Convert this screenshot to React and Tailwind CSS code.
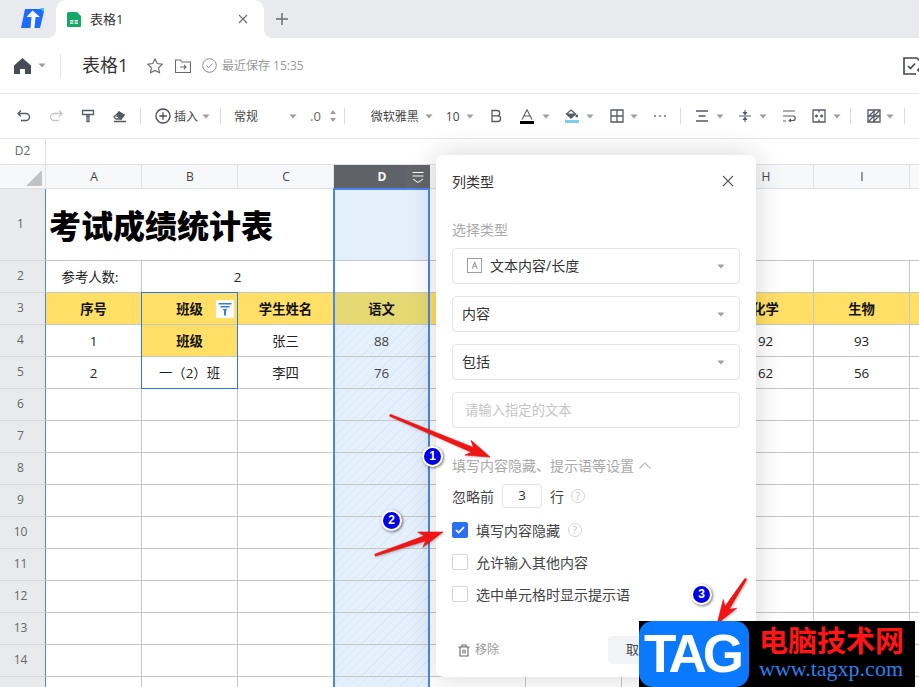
import React from 'react';

const Caret = ({ className = '' }) => (
  <svg width="8" height="5" viewBox="0 0 8 5" className={className}><path d="M0.5 0.5h7L4 4.5z" fill="#9a9da3" /></svg>
);
const Ico = ({ children, w = 16, h = 16, vb, className = '' }) => (
  <svg width={w} height={h} viewBox={vb || `0 0 ${w} ${h}`} fill="none" stroke="#555a64" strokeWidth="1.3" className={className}>{children}</svg>
);
const Sep = ({ className = '' }) => <div className={`w-px h-4 bg-[#d9dbde] ${className}`} />;

const Help = ({ className = '' }) => (
  <span className={`w-[14px] h-[14px] rounded-full border border-[#d4d4d4] text-[#c4c4c4] text-[10px] leading-[12px] text-center shrink-0 ${className}`}>?</span>
);

function Arrow({ x1, y1, x2, y2 }) {
  const dx = x2 - x1, dy = y2 - y1, L = Math.hypot(dx, dy), ux = dx / L, uy = dy / L, nx = -uy, ny = ux;
  const p = (a, b) => `${(x1 + ux * a + nx * b).toFixed(1)},${(y1 + uy * a + ny * b).toFixed(1)}`;
  const pts = [p(0, -0.8), p(L - 19, -2.4), p(L - 24, -8), p(L, 0), p(L - 24, 8), p(L - 19, 2.8), p(0, 1.2)].join(' ');
  return <polygon points={pts} fill="#f01414" stroke="#e81010" strokeWidth="0.6" />;
}

const Badge = ({ n, className }) => (
  <div className={`absolute w-[21px] h-[21px] rounded-full bg-[#0000e6] border-2 border-white shadow-[1px_1px_3px_rgba(0,0,0,.55)] text-white text-[12px] font-bold leading-[17px] text-center font-['Liberation_Sans',sans-serif] ${className}`}>{n}</div>
);

const colLetters = ['A', 'B', 'C', 'D', 'E', 'F', 'G', 'H', 'I', 'J'];
const line = 'border-r border-b border-[#c6c6c6]';
const hatch = "bg-[repeating-linear-gradient(135deg,#e4f0fb_0px,#e4f0fb_5px,#d9e9f7_5px,#d9e9f7_6px)]";

const RowHead = ({ n }) => (
  <div className="flex items-center justify-center pr-1 pb-0.5 bg-[#e9eaec] border-r border-r-[#4a86f0] border-b border-b-[#d4d6d9] text-[12px] text-[#666]">{n}</div>
);

const Cell = ({ children, className = '', span = '' }) => (
  <div className={`flex items-center justify-center pt-[2px] ${line} ${span} ${className}`}>{children}</div>
);

function Grid() {
  const headers = ['序号', '班级', '学生姓名', '语文', '', '', '', '化学', '生物', ''];
  const r4 = ['1', '班级', '张三', '88', '', '', '', '92', '93', ''];
  const r5 = ['2', '一（2）班', '李四', '76', '', '', '', '62', '56', ''];
  const yellow = 'bg-[#ffdf66] font-bold text-[#111]';
  return (
    <div className="grid grid-cols-[46px_repeat(10,96px)] grid-rows-[24px_72px_repeat(14,32px)] text-[13.33px] text-[#222]">
      <div className="relative bg-[#f7f8fa] border-r border-b border-[#dfe1e5]">
        <div className="absolute right-[3px] bottom-[2px] w-4 h-4 bg-[#c0c2c5] [clip-path:polygon(100%_0,100%_100%,0_100%)]" />
      </div>
      {colLetters.map((c) => c === 'D' ? (
        <div key={c} className="relative flex items-center justify-center bg-[#5f6266] text-white font-bold text-[12px]">
          D
          <div className="absolute right-0 top-0 bottom-0 w-6 flex items-center justify-center bg-[#636569]">
            <svg width="14" height="14" viewBox="0 0 14 14" fill="none" stroke="#fff" strokeWidth="1"><path d="M1.5 2.5h11M1.5 6h11M2 9l5 3.5L12 9" /></svg>
          </div>
        </div>
      ) : (
        <div key={c} className="flex items-center justify-center pl-px bg-[#f7f8fa] border-r border-b border-[#dfe1e5] text-[12px] text-[#444]">{c}</div>
      ))}

      <RowHead n={1} />
      <Cell span="col-span-3" className="justify-start pl-[3px] pt-[3px] bg-white">
        <span className="text-[32px] font-black text-black leading-none">考试成绩统计表</span>
      </Cell>
      <Cell className="bg-[#e3f0fc]" />
      <Cell span="col-span-6" className="bg-white" />

      <RowHead n={2} />
      <Cell className="pr-[7px]">参考人数:</Cell>
      <Cell span="col-span-2">2</Cell>
      <Cell /><Cell /><Cell /><Cell /><Cell /><Cell /><Cell />

      <RowHead n={3} />
      {headers.map((h, i) => (
        <Cell key={i} className={`${i === 3 ? 'bg-[#e4d972] font-bold text-[#111]' : yellow} ${i === 1 ? 'relative' : ''}`}>
          {h}
          {i === 1 && (
            <div className="absolute right-[3px] top-[7px] w-[18px] h-[18px] bg-white flex items-center justify-center">
              <svg width="14" height="14" viewBox="0 0 14 14" fill="#2f80ed"><path d="M0.5 1h13v1.4h-13zM2.5 4h9v1.4h-9zM5 7h4v1.2H5zM6 8h2v5.5H6z" /></svg>
            </div>
          )}
        </Cell>
      ))}

      <RowHead n={4} />
      {r4.map((v, i) => <Cell key={i} className={i === 1 ? yellow : i === 3 ? `${hatch} text-[#444]` : ''}>{v}</Cell>)}
      <RowHead n={5} />
      {r5.map((v, i) => <Cell key={i} className={i === 3 ? `${hatch} text-[#444]` : ''}>{v}</Cell>)}

      {[6, 7, 8, 9, 10, 11, 12, 13, 14, 15].map((n) => (
        <React.Fragment key={n}>
          <RowHead n={n} />
          {colLetters.map((c) => <Cell key={c} className={c === 'D' ? hatch : ''} />)}
        </React.Fragment>
      ))}
    </div>
  );
}

const Select = ({ children }) => (
  <div className="h-9 mb-3 pl-[9px] pr-[14px] flex items-center justify-between border border-[#e4e5e7] rounded-[4px] text-[14px] text-[#333] w-[288px]">
    <div className="flex items-center pb-[2px]">{children}</div>
    <Caret />
  </div>
);

const Check = ({ on, children, help }) => (
  <div className="flex items-center h-4 mt-4 text-[14px] text-[#444]">
    <div className={`w-4 h-4 rounded-[2px] flex items-center justify-center mr-2 border ${on ? 'bg-[#2b6ff2] border-[#2b6ff2]' : 'bg-white border-[#d4d5d7]'}`}>
      {on && <svg width="10" height="8" viewBox="0 0 10 8" fill="none" stroke="#fff" strokeWidth="1.7"><path d="M1 4l2.6 2.6L9 1.2" /></svg>}
    </div>
    <span>{children}</span>
    {help && <Help className="ml-2" />}
  </div>
);

function Dialog() {
  return (
    <div className="absolute left-[436px] top-[155px] w-[320px] h-[522px] bg-white rounded-[8px] shadow-[0_0_28px_rgba(0,0,0,.17)] px-4 pt-[14px]">
      <div className="flex items-center justify-between h-6">
        <span className="text-[14px] text-[#333]">列类型</span>
        <svg width="12" height="12" viewBox="0 0 12 12" stroke="#555a64" strokeWidth="1.1" className="mr-[6px]"><path d="M1 1l10 10M11 1L1 11" /></svg>
      </div>
      <div className="mt-[27px] mb-[8px] text-[14px] leading-[20px] text-[#aaa]">选择类型</div>
      <Select>
        <span className="w-[15px] h-[15px] ml-[5px] mr-[8px] border border-[#9a9da3] text-[9px] leading-[13px] text-center text-[#777]">A</span>
        文本内容/长度
      </Select>
      <Select>内容</Select>
      <Select>包括</Select>
      <div className="h-9 px-[12px] pt-px flex items-center border border-[#e4e5e7] rounded-[4px] text-[13.33px] text-[#c4c4c4]">请输入指定的文本</div>
      <div className="mt-[27px] flex items-center h-5 text-[14px] text-[#aaa]">
        填写内容隐藏、提示语等设置
        <svg width="12" height="7" viewBox="0 0 12 7" fill="none" stroke="#b8b8b8" strokeWidth="1.1" className="ml-[5px]"><path d="M0.5 6.5L6 1l5.5 5.5" /></svg>
      </div>
      <div className="mt-[9px] flex items-center text-[14px] text-[#444] h-6">
        <span>忽略前</span>
        <span className="w-10 h-6 ml-2 border border-[#e4e5e7] rounded-[3px] flex items-center justify-center text-[13.33px] text-[#333]">3</span>
        <span className="ml-2">行</span>
        <Help className="ml-[7px]" />
      </div>
      <div className="mt-[-2px]">
        <Check on help>填写内容隐藏</Check>
        <Check>允许输入其他内容</Check>
        <Check>选中单元格时显示提示语</Check>
      </div>
      <div className="mt-[34px] flex items-center justify-between h-7">
        <div className="flex items-center pl-[6px] text-[12px] text-[#999]">
          <svg width="12" height="13" viewBox="0 0 12 13" fill="none" stroke="#666" strokeWidth="1.1" className="mr-[5px]"><path d="M0.5 3h11M4 3V1h4v2M2 3v9h8V3M5 5.5v4M7 5.5v4" /></svg>
          移除
        </div>
        <div className="flex gap-2">
          <div className="w-[62px] h-7 rounded-[4px] bg-[#f2f3f5] flex items-center justify-center text-[13px] text-[#444]">取消</div>
          <div className="w-[62px] h-7 rounded-[4px] bg-[#2b6ff2] flex items-center justify-center text-[13px] text-white">确定</div>
        </div>
      </div>
    </div>
  );
}

function Toolbar() {
  const item = 'w-8 flex items-center justify-center shrink-0';
  return (
    <div className="h-[45px] border-b border-[#e6e7e9] flex items-center pl-2 text-[12px] text-[#444]">
      <div className={item}><Ico><path d="M5 2.5L2 5.5l3 3M2.5 5.5h7.5a3.5 3.5 0 010 7H5" /></Ico></div>
      <div className={item}><svg width="16" height="16" viewBox="0 0 16 16" fill="none" stroke="#c4c6ca" strokeWidth="1.3"><path d="M11 2.5l3 3-3 3M13.5 5.5H6a3.5 3.5 0 000 7h5" /></svg></div>
      <div className={item}><Ico><path d="M2.5 2.5h11v4h-11zM7 6.5h2v2H7zM7 8.5h2v5H7z" /></Ico></div>
      <div className={item}><Ico><path d="M2 9l5-5 5 3-3 4H4zM2 13.5h12" /><path d="M7 4l5 3-3 4-4-3z" fill="#555a64" /></Ico></div>
      <Sep className="ml-1" />
      <svg width="16" height="16" viewBox="0 0 16 16" fill="none" stroke="#444a55" strokeWidth="1.3" className="ml-[14px]"><circle cx="8" cy="8" r="7" /><path d="M8 4.2v7.6M4.2 8h7.6" /></svg>
      <span className="ml-[3px] pt-px w-6">插入</span>
      <Caret className="ml-1" />
      <Sep className="ml-[10px]" />
      <span className="ml-[13px] pt-px w-[55px]">常规</span>
      <Caret />
      <span className="ml-[13px] pt-px text-[13px] text-[#666]">.0</span>
      <svg width="8" height="14" viewBox="0 0 8 14" fill="#9a9da3" className="ml-[8px]"><path d="M4 1l3 4H1zM4 13l3-4H1z" /></svg>
      <Sep className="ml-[7px]" />
      <span className="ml-[26px] pt-px w-[48px]">微软雅黑</span>
      <Caret className="ml-[6px]" />
      <span className="ml-[13px] pt-px w-[15px]">10</span>
      <Caret className="ml-[5px]" />
      <svg width="12" height="14" viewBox="0 0 12 14" fill="none" stroke="#555a64" strokeWidth="1.3" className="ml-[16px]"><path d="M2 1.5h5a2.7 2.7 0 010 5.4H2zM2 6.9h5.8a2.8 2.8 0 010 5.6H2z" /></svg>
      <div className="ml-[18px] flex flex-col items-center w-[14px]">
        <svg width="12" height="11" viewBox="0 0 12 11" fill="none" stroke="#555a64" strokeWidth="1.1"><path d="M1 10.5L6 .8l5 9.7M2.8 7h6.4" /></svg>
        <div className="w-[14px] h-[3px] mt-[1px] bg-black" />
      </div>
      <Caret className="ml-[8px]" />
      <div className="ml-[15px] flex flex-col items-center w-[14px]">
        <svg width="13" height="10" viewBox="0 0 13 10" fill="none" stroke="#555a64" strokeWidth="1.2"><path d="M6 1l4.5 4L6 9 1.5 5z" /><path d="M2 5.200h8L6 9z" fill="#555a64" /><circle cx="11.800" cy="7" r=".8" fill="#555a64" /></svg>
        <div className="w-[14px] h-[3px] mt-[1px] bg-[#7fcdee]" />
      </div>
      <Caret className="ml-[7px]" />
      <Ico w={14} h={14} vb="0 0 14 14" className="ml-[16px]"><path d="M1 1h12v12H1zM7 1v12M1 7h12" /></Ico>
      <Caret className="ml-[6px]" />
      <svg width="14" height="4" viewBox="0 0 14 4" fill="#777" className="ml-[15px]"><circle cx="2" cy="2" r="1" /><circle cx="7" cy="2" r="1" /><circle cx="12" cy="2" r="1" /></svg>
      <Sep className="ml-[13px]" />
      <Ico w={14} h={12} vb="0 0 14 12" className="ml-[14px]"><path d="M1 1h12M3.5 6h7M1 11h12" /></Ico>
      <Caret className="ml-[7px]" />
      <svg width="14" height="14" viewBox="0 0 14 14" fill="none" stroke="#555a64" strokeWidth="1.1" className="ml-[14px]"><path d="M1 7h12M7 1v3M7 10v3" /><path d="M5.500 3.500h3L7 5.500zM5.500 10.500h3L7 8.500z" fill="#555a64" /></svg>
      <Caret className="ml-[7px]" />
      <svg width="14" height="12" viewBox="0 0 14 12" fill="none" stroke="#555a64" strokeWidth="1.2" className="ml-[15px]"><path d="M1 1h12M1 6h10a2 2 0 010 4.500H7.500M1 11h3M9 9l-1.800 1.500L9 12" /></svg>
      <Ico w={14} h={14} vb="0 0 14 14" className="ml-[16px]"><path d="M1 1h12v12H1zM7 1v2.500M7 10.500V13M2.800 7h3.200M8 7h3.200M4.400 5.500v3M9.600 5.500v3" /></Ico>
      <Caret className="ml-[7px]" />
      <Sep className="ml-[9px]" />
      <Ico w={14} h={14} vb="0 0 14 14" className="ml-4"><path d="M1 1h12v12H1zM1 7h12M7 1v12" /><path d="M1 8L8 1M6 13l7-7M1 13L13 1" /></Ico>
      <Caret className="ml-[5px]" />
      <Sep className="ml-[10px]" />
    </div>
  );
}

export default function App() {
  return (
    <div className="relative w-[919px] h-[687px] overflow-hidden bg-white font-['Open_Sans','Noto_Sans_CJK_SC',sans-serif]">
      {/* Tab bar */}
      <div className="h-[38px] bg-[#e8eaed] flex items-end">
        <div className="w-[56px] h-[38px] flex items-center justify-center pl-[7px] pb-[3px]">
          <svg width="24" height="20" viewBox="0 0 24 20">
            <path d="M5 1h16l3 2.500L20 20H1z" fill="#1e6cff" />
            <path d="M20 0l4 0v4z" fill="#36c5f0" />
            <path d="M12.500 2.500L20 9h-4.500L14.400 20h-3.900L11.500 9H6.500z" fill="#fff" />
          </svg>
        </div>
        <div className="relative w-[208px] h-[38px] bg-white rounded-t-[10px] flex items-center pl-[11px] pr-4 text-[13px] text-[#333]">
          <div className="absolute -left-[9px] bottom-0 w-[9px] h-[9px] bg-[radial-gradient(circle_at_0_0,#e8eaed_9px,#fff_9.5px)]" />
          <div className="absolute -right-[9px] bottom-0 w-[9px] h-[9px] bg-[radial-gradient(circle_at_100%_0,#e8eaed_9px,#fff_9.5px)]" />
          <svg width="14" height="15" viewBox="0 0 14 15"><path d="M1.500 0H10l4 4v10a1 1 0 01-1 1H1a1 1 0 01-1-1V1.500A1.500 1.500 0 011.500 0z" fill="#17a866" /><path d="M3 8h3.400v1.400H3zM7.600 8H11v1.400H7.600zM3 10.400h3.400v1.400H3zM7.600 10.400H11v1.400H7.600z" fill="#fff" /></svg>
          <span className="ml-[9px] pt-px flex-1">表格1</span>
          <svg width="10" height="10" viewBox="0 0 10 10" stroke="#6a6e75" strokeWidth="1.1"><path d="M1 1l8 8M9 1L1 9" /></svg>
        </div>
        <svg width="14" height="14" viewBox="0 0 14 14" stroke="#6a6e75" strokeWidth="1.5" className="ml-[11px] mb-3"><path d="M7 1v12M1 7h12" /></svg>
      </div>

      {/* Doc header */}
      <div className="h-[56px] border-b border-[#e6e7e9] flex items-center pl-[14px]">
        <svg width="17" height="16" viewBox="0 0 17 16" fill="#474c56"><path d="M8.500 0L17 7.500V16h-6v-5H6v5H0V7.500z" /></svg>
        <Caret className="ml-[7px]" />
        <div className="w-px h-6 bg-[#e3e4e6] ml-[14px]" />
        <span className="ml-[21px] w-[45px] whitespace-nowrap text-[18px] text-[#333]">表格1</span>
        <svg width="16" height="16" viewBox="0 0 16 16" fill="none" stroke="#666a72" strokeWidth="1.1" className="ml-[20px]"><path d="M8 1l2.200 4.600 5 .7-3.600 3.500.9 5L8 12.400l-4.500 2.400.9-5L.8 6.300l5-.7z" /></svg>
        <svg width="16" height="14" viewBox="0 0 16 14" fill="none" stroke="#666a72" strokeWidth="1.1" className="ml-[12px]"><path d="M.5 1h5l1.500 2h8.500v10.500H.5zM5 8h6M9 6l2 2-2 2" /></svg>
        <svg width="15" height="15" viewBox="0 0 15 15" fill="none" stroke="#8a8d93" strokeWidth="1" className="ml-[11px]"><circle cx="7.500" cy="7.500" r="6.800" /><path d="M4.500 7.500l2.200 2.200 3.800-4" /></svg>
        <span className="ml-[5px] pt-px text-[12px] text-[#999]">最近保存 15:35</span>
        <svg width="18" height="18" viewBox="0 0 18 18" fill="none" stroke="#414651" strokeWidth="1.6" className="ml-auto -mr-[2px]"><path d="M14 1H1v16h12M5 9l2.500 2.500L12 6.500M14 1l3 3v7M14 13h4M16 11v4" /></svg>
      </div>

      <Toolbar />

      {/* Formula bar */}
      <div className="h-[26px] border-b border-[#dfe1e5] flex">
        <div className="w-[46px] border-r border-[#dfe1e5] flex items-center justify-center pb-[1px] text-[12px] text-[#666]">D2</div>
      </div>

      <Grid />

      {/* selection frames */}
      <div className="absolute left-[333px] top-[188px] w-[97px] h-[510px] border-2 border-[#4a86f0]" />
      <div className="absolute left-[141px] top-[292px] w-[97px] h-[97px] border border-[#2b78e8]" />

      <Dialog />

      {/* annotation arrows */}
      <svg width="919" height="687" className="absolute left-0 top-0 drop-shadow-[1px_1px_1px_rgba(0,0,0,.25)]">
        <Arrow x1={390} y1={415} x2={490} y2={457} />
        <Arrow x1={375} y1={555} x2={443} y2={532} />
        <Arrow x1={746} y1={579} x2={717} y2={624} />
      </svg>
      <Badge n="1" className="left-[422px] top-[446px]" />
      <Badge n="2" className="left-[381px] top-[510px]" />
      <Badge n="3" className="left-[691px] top-[584px]" />

      {/* Watermark */}
      <div className="absolute left-[639px] top-[621px] w-[276px] h-[66px] bg-black flex">
        <div className="w-[110px] h-[66px] bg-[#0a78ff] rounded-[14px] flex items-center justify-center text-white text-[53px] font-bold tracking-[-4px] pr-1 font-['Liberation_Sans',sans-serif]">TAG</div>
        <div className="flex-1 pl-[10px] flex flex-col">
          <div className="text-[29px] leading-[36px] font-bold text-[#ff1515] whitespace-nowrap font-['Noto_Sans_CJK_SC',sans-serif]">电脑技术网</div>
          <div className="text-[22px] leading-[24px] text-[#2b80ee] whitespace-nowrap font-['Liberation_Serif',serif]">www.tagxp.com</div>
        </div>
      </div>
    </div>
  );
}
